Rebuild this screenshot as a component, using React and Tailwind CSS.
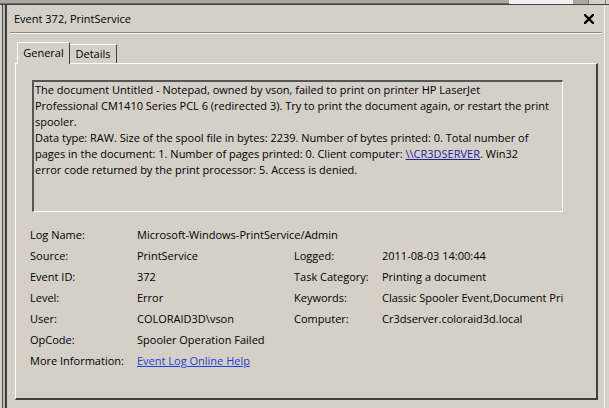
import { Fragment } from 'react'

export default function App() {
  const fields = [
    ['Source:', 'PrintService', 'Logged:', '2011-08-03 14:00:44'],
    ['Event ID:', '372', 'Task Category:', 'Printing a document'],
    ['Level:', 'Error', 'Keywords:', 'Classic Spooler Event,Document Pri'],
    ['User:', 'COLORAID3D\\vson', 'Computer:', 'Cr3dserver.coloraid3d.local'],
  ]

  return (
    <div className="w-[609px] h-[408px] overflow-hidden bg-[#d4d0c8] text-[11px] text-black font-['Open_Sans',_'Liberation_Sans',_sans-serif]">
      {/* window strip behind the dialog */}
      <div className="h-[5px] flex border-b border-[#404040]">
        <div className="w-[509px] bg-[#a9a7a2] border-b border-[#6a6a6a]"></div>
        <div className="w-[64px] bg-[#f1f0ee]"></div>
        <div className="w-[15px] bg-[#a9a7a2]"></div>
        <div className="w-[18px] bg-[#d4d0c8] border-x border-[#808080]"></div>
      </div>

      <div className="flex h-[403px]">
        <div className="w-[8px] flex">
          <div className="w-[2px]"></div>
          <div className="w-[1px] bg-[#505050]"></div>
          <div className="w-[2px] bg-[#bcbab5]"></div>
          <div className="w-[2px] bg-[#3c3c3c]"></div>
        </div>

        <div className="w-[597px] flex flex-col border-r border-[#eeeeee]">
          <div className="h-[27px] flex items-center justify-between pl-[6px] pr-[10px]">
            <span className="leading-none">Event 372, PrintService</span>
            <svg width="10" height="10" viewBox="0 0 10 10">
              <path d="M1 1 L9 9 M9 1 L1 9" stroke="#000" strokeWidth="2.4" strokeLinecap="square" />
            </svg>
          </div>
          <div className="ml-[2px] mr-[2px] h-[2px] border-t border-[#8a8a8a] border-b border-b-[#f4f4f4]"></div>

          <div className="flex items-end pl-[9px] pt-[6px] h-[29px]">
            <div className="relative z-10 h-[22px] w-[53px] flex items-center justify-center bg-[#d4d0c8] border-l border-t border-white border-r border-r-[#404040] -mb-[1px]">
              General
            </div>
            <div className="h-[19px] w-[47px] flex items-center justify-center border-t border-white border-r border-r-[#404040]">
              Details
            </div>
          </div>

          <div className="ml-[7px] w-[583px] h-[337px] flex flex-col pl-[14px] pt-[16px] border-l border-t border-white border-r-2 border-b-2 border-r-[#404040] border-b-[#404040]">
            <div className="ml-[2px] w-[531px] h-[132px] pl-[1px] leading-[16px] border-t-2 border-l-2 border-t-[#555555] border-l-[#555555] border-r border-b border-r-white border-b-white whitespace-nowrap">
              <div>The document Untitled - Notepad, owned by vson, failed to print on printer HP LaserJet</div>
              <div>Professional CM1410 Series PCL 6 (redirected 3). Try to print the document again, or restart the print</div>
              <div>spooler.</div>
              <div>Data type: RAW. Size of the spool file in bytes: 2239. Number of bytes printed: 0. Total number of</div>
              <div>
                pages in the document: 1. Number of pages printed: 0. Client computer:{' '}
                <span className="text-[#22229a] underline">{'\\\\CR3DSERVER'}</span>. Win32
              </div>
              <div>error code returned by the print processor: 5. Access is denied.</div>
            </div>

            <div className="mt-[13px] w-[540px] grid grid-cols-[107px_157px_88px_188px] auto-rows-[21px] items-center whitespace-nowrap">
              <div>Log Name:</div>
              <div className="col-span-3">Microsoft-Windows-PrintService/Admin</div>
              {fields.map(([a, b, c, d]) => (
                <Fragment key={a}>
                  <div>{a}</div>
                  <div>{b}</div>
                  <div>{c}</div>
                  <div>{d}</div>
                </Fragment>
              ))}
              <div>OpCode:</div>
              <div className="col-span-3">Spooler Operation Failed</div>
              <div>More Information:</div>
              <div className="col-span-3">
                <span className="text-[#1f3fcf] underline">Event Log Online Help</span>
              </div>
            </div>
          </div>
        </div>
      </div>
    </div>
  )
}
